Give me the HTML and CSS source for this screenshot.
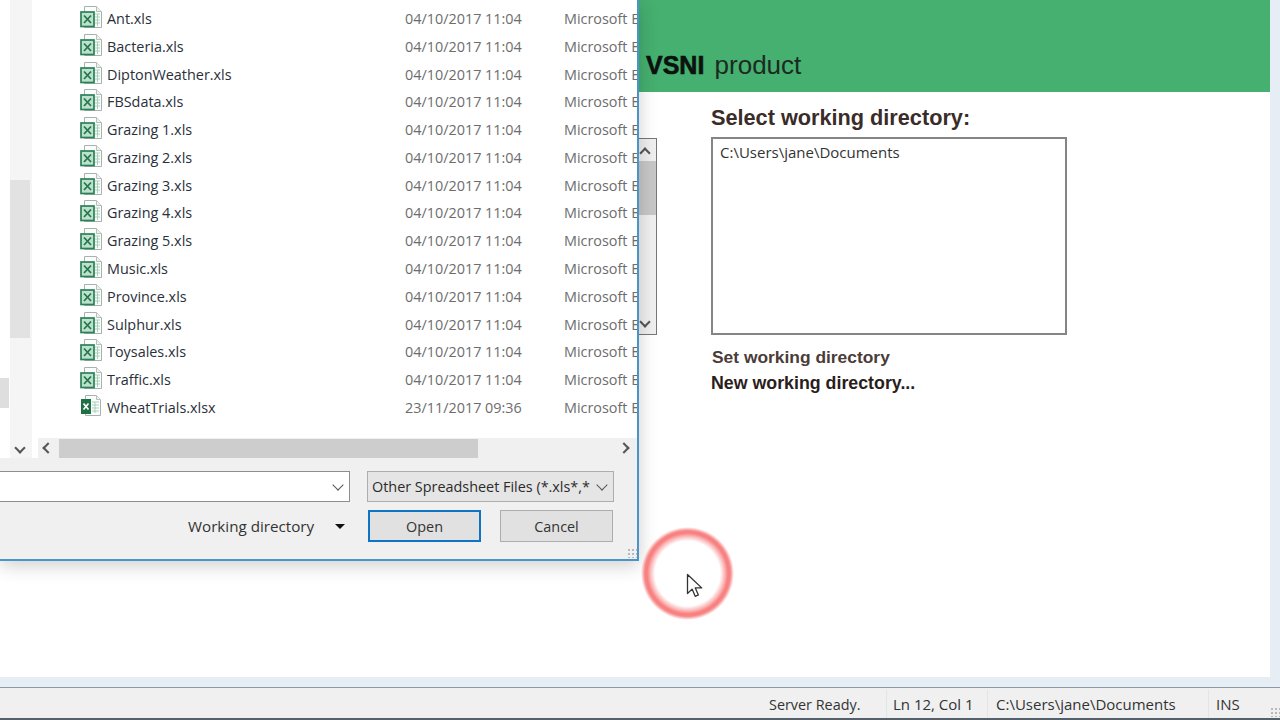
FILE: index.html
```html
<!DOCTYPE html>
<html lang="en">
<head>
    <meta charset="UTF-8">
    <meta name="viewport" content="width=device-width, initial-scale=1.0">
    <title>Select working directory</title>
    <link rel="stylesheet" href="styles.css">
</head>
<body>
    <svg class="defs" width="0" height="0">
        <symbol id="xls" viewBox="0 0 22 22">
            <path d="M4.5 .5h12l5 5v16h-17z" fill="#fbfdfc" stroke="#a8b2ac"/>
            <path d="M16.5 .5v5h5" fill="#eef2ef" stroke="#b8c0bb"/>
            <path d="M15 8h5M15 11h5M15 14h5M15 17h5M17.5 8v12" stroke="#a9d0ba"/>
            <rect x="1" y="6" width="13" height="14.5" fill="#bfe0cc" stroke="#2a8158" stroke-width="1.7"/>
            <path d="M4 9.5l7 7.5M11 9.5l-7 7.5" stroke="#217a4e" stroke-width="1.8"/>
        </symbol>
        <symbol id="xlsx" viewBox="0 0 22 22">
            <path d="M5.5 .5h11l4 4v16h-15z" fill="#fbfdfc" stroke="#a8b2ac"/>
            <path d="M16.5 .5v4h4" fill="#eef2ef" stroke="#b8c0bb"/>
            <path d="M12 7h7M12 10h7M12 13h7M12 16h7M15 7v11" stroke="#a9d0ba"/>
            <rect x="1" y="4" width="10" height="15" fill="#1e7145"/>
            <path d="M3.5 8.5l5 6M8.5 8.5l-5 6" stroke="#fff" stroke-width="1.7"/>
        </symbol>
    </svg>

    <div class="workspace">
        <div class="left-area"></div>
        <div class="right-pane">
            <div class="banner">
                <div class="banner-text"><b>VSNI</b> product</div>
            </div>
            <div class="pane-body">
                <div class="pane-scroll">
                    <span class="chev up"></span>
                    <div class="pane-thumb"></div>
                    <span class="chev down"></span>
                </div>
                <div class="wd-form">
                    <h2 class="wd-title">Select working directory:</h2>
                    <div class="wd-list">C:\Users\jane\Documents</div>
                    <div class="wd-set">Set working directory</div>
                    <div class="wd-new">New working directory...</div>
                </div>
            </div>
        </div>
    </div>

    <div class="statusbar">
        <span class="st st-server">Server Ready.</span>
        <span class="st st-pos">Ln 12, Col 1</span>
        <span class="st st-path">C:\Users\jane\Documents</span>
        <span class="st st-ins">INS</span>
        <span class="grip status-grip"></span>
    </div>

    <!-- file dialog floats over the app -->
    <div class="dialog">
        <div class="dlg-main">
            <div class="nav">
                <div class="nav-track">
                    <div class="nav-thumb"></div>
                    <span class="chev down"></span>
                </div>
                <div class="nav-sel"></div>
            </div>
            <div class="files">
                <div class="file-list">
                    <div class="row"><svg class="ico"><use href="#xls"/></svg><span>Ant.xls</span><span class="date">04/10/2017 11:04</span><span class="type">Microsoft Excel 97-2003</span></div>
                    <div class="row"><svg class="ico"><use href="#xls"/></svg><span>Bacteria.xls</span><span class="date">04/10/2017 11:04</span><span class="type">Microsoft Excel 97-2003</span></div>
                    <div class="row"><svg class="ico"><use href="#xls"/></svg><span>DiptonWeather.xls</span><span class="date">04/10/2017 11:04</span><span class="type">Microsoft Excel 97-2003</span></div>
                    <div class="row"><svg class="ico"><use href="#xls"/></svg><span>FBSdata.xls</span><span class="date">04/10/2017 11:04</span><span class="type">Microsoft Excel 97-2003</span></div>
                    <div class="row"><svg class="ico"><use href="#xls"/></svg><span>Grazing 1.xls</span><span class="date">04/10/2017 11:04</span><span class="type">Microsoft Excel 97-2003</span></div>
                    <div class="row"><svg class="ico"><use href="#xls"/></svg><span>Grazing 2.xls</span><span class="date">04/10/2017 11:04</span><span class="type">Microsoft Excel 97-2003</span></div>
                    <div class="row"><svg class="ico"><use href="#xls"/></svg><span>Grazing 3.xls</span><span class="date">04/10/2017 11:04</span><span class="type">Microsoft Excel 97-2003</span></div>
                    <div class="row"><svg class="ico"><use href="#xls"/></svg><span>Grazing 4.xls</span><span class="date">04/10/2017 11:04</span><span class="type">Microsoft Excel 97-2003</span></div>
                    <div class="row"><svg class="ico"><use href="#xls"/></svg><span>Grazing 5.xls</span><span class="date">04/10/2017 11:04</span><span class="type">Microsoft Excel 97-2003</span></div>
                    <div class="row"><svg class="ico"><use href="#xls"/></svg><span>Music.xls</span><span class="date">04/10/2017 11:04</span><span class="type">Microsoft Excel 97-2003</span></div>
                    <div class="row"><svg class="ico"><use href="#xls"/></svg><span>Province.xls</span><span class="date">04/10/2017 11:04</span><span class="type">Microsoft Excel 97-2003</span></div>
                    <div class="row"><svg class="ico"><use href="#xls"/></svg><span>Sulphur.xls</span><span class="date">04/10/2017 11:04</span><span class="type">Microsoft Excel 97-2003</span></div>
                    <div class="row"><svg class="ico"><use href="#xls"/></svg><span>Toysales.xls</span><span class="date">04/10/2017 11:04</span><span class="type">Microsoft Excel 97-2003</span></div>
                    <div class="row"><svg class="ico"><use href="#xls"/></svg><span>Traffic.xls</span><span class="date">04/10/2017 11:04</span><span class="type">Microsoft Excel 97-2003</span></div>
                    <div class="row"><svg class="ico"><use href="#xlsx"/></svg><span>WheatTrials.xlsx</span><span class="date">23/11/2017 09:36</span><span class="type">Microsoft Excel Worksheet</span></div>
                </div>
                <div class="hscroll">
                    <span class="chev left"></span>
                    <div class="hthumb"></div>
                    <span class="chev right"></span>
                </div>
            </div>
        </div>
        <div class="dlg-inputs">
            <div class="name-input"><span class="chev-thin"></span></div>
            <div class="type-select">Other Spreadsheet Files (*.xls*,*<span class="chev-thin"></span></div>
        </div>
        <div class="dlg-buttons">
            <div class="tools">Working directory<span class="caret"></span></div>
            <div class="btn btn-open">Open</div>
            <div class="btn btn-cancel">Cancel</div>
        </div>
        <span class="grip dlg-grip"></span>
    </div>

    <!-- click highlight + pointer -->
    <div class="click-ring"></div>
    <svg class="pointer" width="18" height="26" viewBox="0 0 18 26">
        <path d="M1.5 1.5v19l4.6-4.4 3.1 7.2 3.2-1.4-3.1-7h6.4z" fill="#fff" stroke="#333" stroke-width="1.3" stroke-linejoin="round"/>
    </svg>
</body>
</html>
```

FILE: styles.css
```css
* {
    box-sizing: border-box;
}
body {
    margin: 0;
    width: 1280px;
    height: 720px;
    overflow: hidden;
    display: flex;
    flex-direction: column;
    background-color: #e6edf4;
    font-family: "Open Sans", "Noto Sans", sans-serif;
    font-size: 14.4px;
    color: #333;
}
.defs {
    position: absolute;
}

/* main window */
.workspace {
    height: 677px;
    width: 1270px;
    display: flex;
    background-color: #fff;
}
.left-area {
    width: 638px;
}
.right-pane {
    flex: 1;
    display: flex;
    flex-direction: column;
}
.banner {
    height: 92px;
    background-color: #45b070;
    display: flex;
    align-items: flex-end;
    padding: 0 0 12px 8px;
}
.banner-text {
    font-family: "Liberation Sans", Arial, sans-serif;
    font-size: 26px;
    line-height: 30px;
    color: #1c2a22;
}
.banner-text b {
    color: #0c120e;
    -webkit-text-stroke: 0.6px #0c120e;
    margin-right: 3px;
    font-size: 25px;
}
.pane-body {
    flex: 1;
    display: flex;
}
.pane-scroll {
    position: relative;
    width: 19px;
    height: 197px;
    margin-top: 46px;
    background-color: #f0f0f0;
    border: 1px solid #777;
    border-left: 0;
    flex-shrink: 0;
}
.pane-thumb {
    position: absolute;
    top: 22px;
    left: 0;
    right: 0;
    height: 54px;
    background-color: #c8c8c8;
}
.pane-scroll .up {
    position: absolute;
    top: 10px;
    left: 3px;
}
.pane-scroll .down {
    position: absolute;
    bottom: 8px;
    left: 3px;
}
.wd-form {
    margin-left: 54px;
    padding-top: 13px;
    font-family: "Liberation Sans", Arial, sans-serif;
    color: #3a2c28;
}
.wd-title {
    margin: 0 0 7px 0;
    font-size: 21.7px;
    line-height: 25px;
    font-weight: bold;
}
.wd-list {
    width: 356px;
    height: 198px;
    border: 2px solid #858585;
    padding: 2px 7px;
    font-family: "Open Sans", sans-serif;
    font-size: 15px;
    line-height: 22px;
    color: #333;
}
.wd-set {
    margin: 12px 0 0 1px;
    font-size: 17.4px;
    line-height: 20px;
    font-weight: bold;
    color: #4a3c38;
}
.wd-new {
    margin-top: 6px;
    font-size: 17.8px;
    line-height: 20px;
    font-weight: bold;
    color: #2a1e1c;
}

/* status bar */
.statusbar {
    position: relative;
    margin-top: 10px;
    height: 33px;
    background-color: #f0f0f0;
    border-top: 1px solid #8c9aa6;
    border-bottom: 2px solid #56606a;
    display: flex;
    align-items: center;
    padding-top: 2px;
    font-size: 15px;
    color: #333;
}
.st {
    height: 100%;
    display: flex;
    align-items: center;
    border-right: 1px solid #e4e4e4;
    white-space: nowrap;
}
.st-server {
    width: 887px;
    padding-left: 769px;
    font-size: 14.4px;
}
.st-pos {
    width: 101px;
    padding-left: 6px;
}
.st-path {
    width: 221px;
    padding-left: 8px;
}
.st-ins {
    padding-left: 7px;
    border-right: 0;
}
.grip {
    position: absolute;
    width: 10px;
    height: 10px;
    background-image: radial-gradient(circle, #b9b9b9 1px, transparent 1.3px);
    background-size: 4px 4px;
}
.status-grip {
    right: 0;
    bottom: 1px;
}

/* file dialog */
.dialog {
    position: absolute;
    left: 0;
    top: 0;
    width: 639px;
    height: 561px;
    display: flex;
    flex-direction: column;
    background-color: #f0f0f0;
    border-right: 2px solid #4a94c8;
    border-bottom: 2px solid #4a94c8;
    box-shadow: 0 4px 18px rgba(0, 0, 0, 0.2);
}
.dlg-main {
    height: 458px;
    display: flex;
    background-color: #fff;
}
.nav {
    position: relative;
    width: 32px;
    background-color: #fff;
}
.nav-track {
    position: absolute;
    left: 10px;
    right: 0;
    top: 0;
    bottom: 0;
    background-color: #f5f5f5;
}
.nav-thumb {
    position: absolute;
    top: 180px;
    left: 0;
    right: 2px;
    height: 158px;
    background-color: #e2e2e2;
}
.nav-track .down {
    position: absolute;
    left: 6px;
    bottom: 6px;
}
.nav-sel {
    position: absolute;
    left: 0;
    top: 378px;
    width: 9px;
    height: 30px;
    background-color: #dedede;
}
.files {
    flex: 1;
    margin-left: 6px;
    min-width: 0;
    display: flex;
    flex-direction: column;
}
.file-list {
    flex: 1;
    padding-top: 4.6px;
    overflow: hidden;
}
.row {
    height: 27.79px;
    display: grid;
    grid-template-columns: 22px 303px 159px 1fr;
    column-gap: 0;
    align-items: center;
    padding-left: 42px;
    white-space: nowrap;
    color: #2a2f3a;
}
.row > span:nth-child(2) {
    padding-left: 5px;
}
.ico {
    width: 22px;
    height: 22px;
    margin-top: -3px;
}
.date,
.type {
    color: #6d6d6d;
    overflow: hidden;
}
.hscroll {
    position: relative;
    height: 20px;
    background-color: #f0f0f0;
    flex-shrink: 0;
}
.hthumb {
    position: absolute;
    left: 21px;
    width: 419px;
    top: 1px;
    bottom: 0;
    background-color: #cdcdcd;
}
.hscroll .left {
    position: absolute;
    left: 6px;
    top: 6px;
}
.hscroll .right {
    position: absolute;
    right: 9px;
    top: 6px;
}

/* little scroll arrows, rotated corners */
.chev {
    display: block;
    width: 8px;
    height: 8px;
    border-top: 2px solid #555;
    border-right: 2px solid #555;
}
.chev.up {
    transform: rotate(-45deg);
}
.chev.down {
    transform: rotate(135deg);
}
.chev.left {
    transform: rotate(-135deg);
}
.chev.right {
    transform: rotate(45deg);
}
.chev-thin {
    display: block;
    width: 8px;
    height: 8px;
    border-right: 1px solid #555;
    border-bottom: 1px solid #555;
    transform: rotate(45deg);
}

.dlg-inputs {
    display: flex;
    margin-top: 13px;
    height: 31px;
}
.name-input {
    width: 350px;
    background-color: #fff;
    border: 1px solid #8e8e8e;
    border-left: 0;
    display: flex;
    align-items: center;
    justify-content: flex-end;
    padding-right: 7px;
}
.name-input .chev-thin {
    margin-top: -3px;
}
.type-select {
    width: 247px;
    margin-left: 17px;
    background-color: #e5e5e5;
    border: 1px solid #adadad;
    display: flex;
    align-items: center;
    justify-content: space-between;
    padding: 0 7px 0 4px;
    white-space: nowrap;
    color: #2b2b2b;
}
.type-select .chev-thin {
    margin-top: -3px;
}
.dlg-buttons {
    display: flex;
    align-items: center;
    margin-top: 8px;
    height: 32px;
}
.tools {
    width: 368px;
    padding-left: 188px;
    display: flex;
    align-items: center;
    white-space: nowrap;
    font-size: 15.2px;
    color: #333;
}
.caret {
    margin-left: 21px;
    border-left: 5px solid transparent;
    border-right: 5px solid transparent;
    border-top: 5px solid #111;
}
.btn {
    width: 113px;
    height: 32px;
    display: flex;
    align-items: center;
    justify-content: center;
    background-color: #e1e1e1;
    border: 1px solid #adadad;
    color: #333;
}
.btn-open {
    border: 2px solid #0f74c4;
}
.btn-cancel {
    margin-left: 19px;
}
.dlg-grip {
    right: 0;
    bottom: 1px;
}

/* recording overlay */
.click-ring {
    position: absolute;
    left: 641px;
    top: 527px;
    width: 93px;
    height: 93px;
    border-radius: 50%;
    background: radial-gradient(circle closest-side, rgba(250, 130, 130, 0) 70%, rgba(248, 125, 125, 0.55) 80%, rgba(247, 120, 120, 0.95) 87%, rgba(247, 120, 120, 0.9) 92%, rgba(250, 130, 130, 0) 100%);
}
.pointer {
    position: absolute;
    left: 686px;
    top: 573px;
}
```
